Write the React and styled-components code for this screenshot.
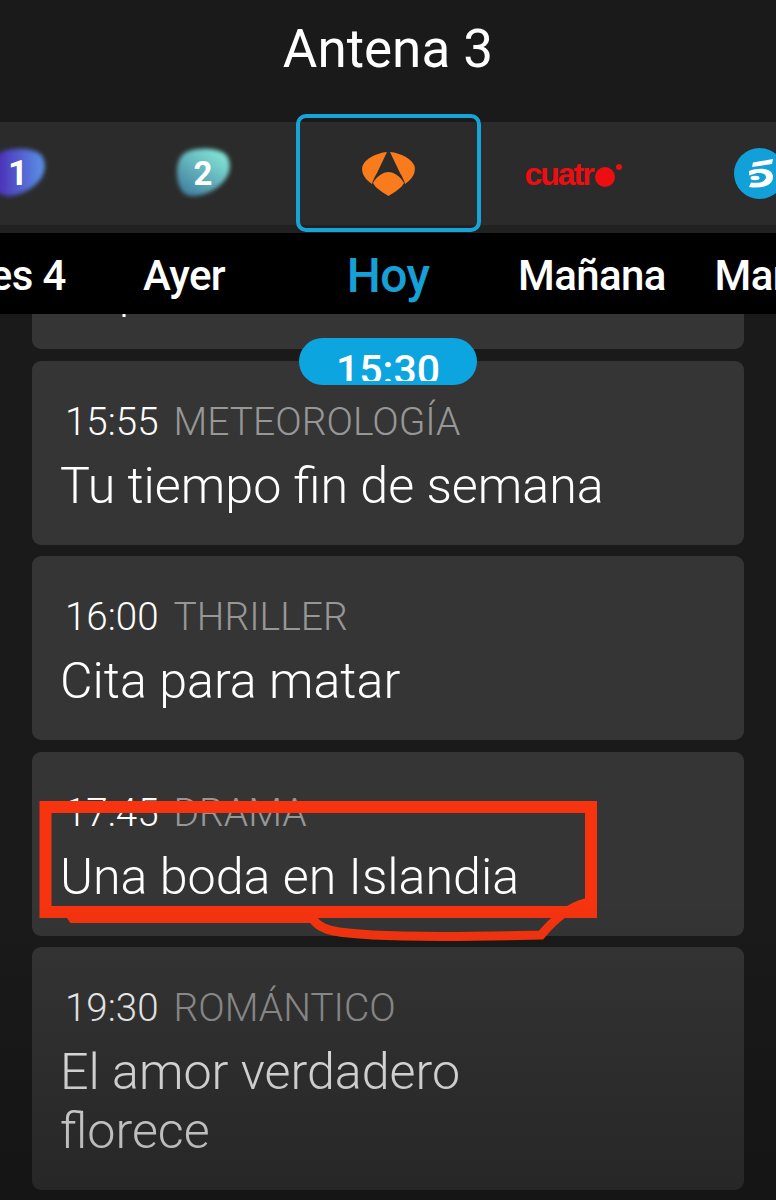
import React from 'react';
import styled, { createGlobalStyle } from 'styled-components';

const GlobalStyle = createGlobalStyle`
  html, body {
    margin: 0;
    padding: 0;
    background: #111;
    font-family: Roboto, "Liberation Sans", sans-serif;
  }
`;

const Page = styled.div`
  position: relative;
  width: 776px;
  height: 1200px;
  overflow: hidden;
  background: #1a1a1a;
  color: #fff;

  &::after {
    content: '';
    position: absolute;
    z-index: 5;
    left: 0;
    right: 0;
    bottom: 0;
    height: 300px;
    pointer-events: none;
    background: linear-gradient(rgba(10, 10, 10, 0), rgba(10, 10, 10, 0.34));
  }
`;

const Title = styled.h1`
  position: relative;
  z-index: 2;
  margin: 0;
  height: 114px;
  padding-bottom: 16px;
  box-sizing: border-box;
  display: flex;
  align-items: center;
  justify-content: center;
  background: #1a1a1a;
  font-size: 53px;
  font-weight: 400;
`;

const ChannelStrip = styled.div`
  position: relative;
  z-index: 2;
  height: 119px;
  display: flex;
  justify-content: center;
  overflow: hidden;
  background: linear-gradient(#1a1a1a 8px, #2b2b2b 8px, #2b2b2b 111px, #212121 111px);
`;

const Channel = styled.div`
  position: relative;
  flex: 0 0 185px;
  height: 118px;
  box-sizing: border-box;
  display: flex;
  align-items: center;
  justify-content: center;
  border: 4px solid ${(p) => (p.$active ? '#18a3d9' : 'transparent')};
  border-radius: 10px;
`;

const CuatroLogo = styled.span`
  display: flex;
  align-items: flex-start;
  margin-top: 1px;
  color: #ee0e12;
  font-family: 'Liberation Sans', sans-serif;
  font-size: 32px;
  font-weight: 700;
  letter-spacing: -2px;
  line-height: 32px;
`;

const CuatroRing = styled.i`
  width: 20px;
  height: 20px;
  margin: 9px 0 0 2px;
  border-radius: 50%;
  background: #ee0e12;
`;

const CuatroDot = styled.i`
  width: 6px;
  height: 6px;
  margin: 6px 0 0 1px;
  border-radius: 50%;
  background: #ee0e12;
`;

const DayTabs = styled.div`
  position: relative;
  z-index: 2;
  height: 81px;
  display: flex;
  justify-content: center;
  overflow: hidden;
  background: #000;
`;

const DayTab = styled.div`
  flex: 0 0 204px;
  display: flex;
  align-items: center;
  justify-content: center;
  padding-top: 4px;
  box-sizing: border-box;
  white-space: nowrap;
  font-size: ${(p) => (p.$active ? '48px' : '42px')};
  font-weight: 500;
  letter-spacing: -0.6px;
  color: ${(p) => (p.$active ? '#15a0d8' : '#fff')};
`;

const Schedule = styled.div`
  display: flex;
  flex-direction: column;
  gap: 11.5px;
  padding: 0 32px;
  margin-top: -149px;
`;

const Card = styled.article`
  box-sizing: border-box;
  padding: 36px 28px 30px 29px;
  border-radius: 9px;
  background: #353535;
`;

const Meta = styled.div`
  display: flex;
  align-items: baseline;
  gap: 15px;
  padding-left: 4px;
  font-size: 38.5px;
  font-weight: 300;
  line-height: 50px;
`;

const Category = styled.span`
  color: #979797;
  font-size: 39px;
`;

const ShowTitle = styled.h2`
  margin: 9px 0 0 -1px;
  max-width: 550px;
  font-size: 50.2px;
  font-weight: 300;
  line-height: 59px;
  color: #fff;
`;

const NowPill = styled.div`
  position: absolute;
  z-index: 3;
  left: 299px;
  top: 338px;
  width: 178px;
  height: 47px;
  border-radius: 24px;
  background: #0ca5e0;
`;

const NowLabel = styled.div`
  height: 43px;
  overflow: hidden;
  text-align: center;
  font-size: 41px;
  font-weight: 500;
  line-height: 65px;
`;

const Scribble = styled.svg`
  position: absolute;
  z-index: 4;
  left: 0;
  top: 0;
  pointer-events: none;
`;

const shows = [
  { time: '15:30', category: 'DEPORTES', title: 'Deportes' },
  { time: '15:55', category: 'METEOROLOGÍA', title: 'Tu tiempo fin de semana' },
  { time: '16:00', category: 'THRILLER', title: 'Cita para matar' },
  { time: '17:45', category: 'DRAMA', title: 'Una boda en Islandia' },
  { time: '19:30', category: 'ROMÁNTICO', title: 'El amor verdadero florece' },
];

const days = ['Viernes 4', 'Ayer', 'Hoy', 'Mañana', 'Martes 8'];

// the two public channels share the same soft blob, only colours and digit differ
function BlobLogo({ id, from, to, angle, digit, size }) {
  return (
    <svg width="64" height="58" viewBox="-4 -4 64 58">
      <defs>
        <linearGradient id={id} {...angle}>
          <stop offset="0" stopColor={from} />
          <stop offset="1" stopColor={to} />
        </linearGradient>
        <filter id={`${id}-soft`} x="-20%" y="-20%" width="140%" height="140%">
          <feGaussianBlur stdDeviation="2.3" />
        </filter>
      </defs>
      <path
        d="M14 3 C26 -1 46 0 52 8 C58 18 54 30 44 38 C34 46 20 50 12 47 C4 44 1 30 2 20 C3 12 6 6 14 3Z"
        fill={`url(#${id})`}
        filter={`url(#${id}-soft)`}
      />
      <text x="28" y="37" textAnchor="middle" fill="#fff" fontFamily="Roboto" fontWeight="700" fontSize={size}>
        {digit}
      </text>
    </svg>
  );
}

function Antena3Logo() {
  return (
    <svg width="53" height="45" viewBox="0 0 53 45">
      <g fill="#f97b1c">
        <path d="M25 1 C14 2 3 8 0.5 15 C-1 21 2 28 10 33 C11 29 13 25 15 22 Z" />
        <path d="M28 1 C39 2 50 8 52.5 15 C54 21 51 28 43 33 C42 29 40 25 38 22 Z" />
        <path d="M26.5 21 C32 21 38 25 42 32 C40 37 31 42 26.5 45 C22 42 13 37 11 32 C15 25 21 21 26.5 21Z" />
      </g>
    </svg>
  );
}

function TelecincoLogo() {
  return (
    <svg width="51" height="51" viewBox="0 0 51 51" style={{ marginLeft: 3 }}>
      <circle cx="25.5" cy="25.5" r="25.5" fill="#12a0d8" />
      <path d="M19 14.5 L39 11 L38 16 L18 19Z" fill="#fff" />
      <path d="M15 23 C25 19 39 20 39 29 C39 38 27 41 15 39 L17 34.5 C24 35.5 32 34 32 29 C32 25.5 27 24.5 23 25 L15 27.5Z" fill="#fff" />
      <ellipse cx="21" cy="30" rx="4.5" ry="2.2" fill="#fff" />
    </svg>
  );
}

export default function App() {
  return (
    <Page>
      <GlobalStyle />
      <Title>Antena 3</Title>
      <ChannelStrip>
        <Channel>
          <BlobLogo id="la1" from="#4a22b2" to="#5a94e8" angle={{ x1: 0, x2: 1 }} digit="1" size="35" />
        </Channel>
        <Channel>
          <BlobLogo id="la2" from="#3f7a9e" to="#88eeda" angle={{ x1: 0.1, y1: 1, x2: 0.9, y2: 0 }} digit="2" size="33" />
        </Channel>
        <Channel $active><Antena3Logo /></Channel>
        <Channel>
          <CuatroLogo>cuatr<CuatroRing /><CuatroDot /></CuatroLogo>
        </Channel>
        <Channel><TelecincoLogo /></Channel>
      </ChannelStrip>
      <DayTabs>
        {days.map((day) => (
          <DayTab key={day} $active={day === 'Hoy'}>{day}</DayTab>
        ))}
      </DayTabs>
      <NowPill>
        <NowLabel>15:30</NowLabel>
      </NowPill>
      <Schedule>
        {shows.map((show) => (
          <Card key={show.time}>
            <Meta>
              <span>{show.time}</span>
              <Category>{show.category}</Category>
            </Meta>
            <ShowTitle>{show.title}</ShowTitle>
          </Card>
        ))}
      </Schedule>
      <Scribble width="776" height="1200" viewBox="0 0 776 1200" fill="none">
        <path d="M70 917 L72 920 L315 920" stroke="#f7340f" strokeWidth="6" strokeLinecap="round" />
        <rect x="45.5" y="807" width="545.5" height="105" stroke="#f7340f" strokeWidth="12" />
        <path d="M311 915 C317 932 340 933 372 935 C430 938 490 936 541 935 C552 922 566 908 585 903" stroke="#f7340f" strokeWidth="9" strokeLinecap="round" />
      </Scribble>
    </Page>
  );
}
